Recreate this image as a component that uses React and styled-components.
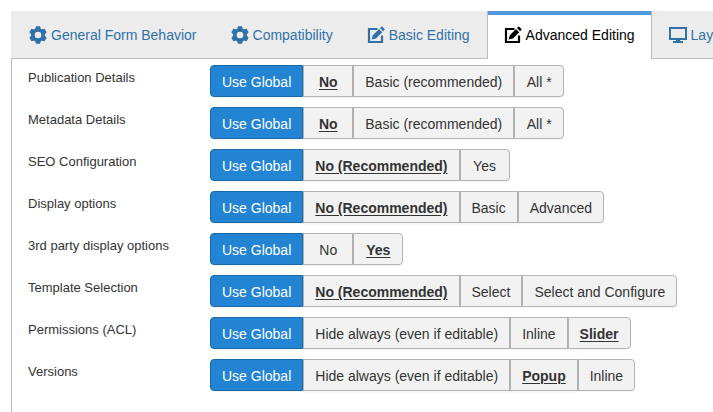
import { useState } from "react"
import styled, { createGlobalStyle } from "styled-components"

const GlobalStyle = createGlobalStyle`
    * {
        box-sizing: border-box;
    }

    body {
        margin: 0;
        background-color: white;
        color: #333;
        font-family: "Liberation Sans", Arial, sans-serif;
        font-size: 14px;
        overflow: hidden;
    }
`

const Page = styled.div`
    min-height: 100vh;
    padding: 11px 0 0 11px;
    display: flex;
    flex-direction: column;
    overflow: hidden;
`

const TabBar = styled.nav`
    height: 48px;
    display: flex;
    padding-left: 1px;
    background-color: #ececec;
    box-shadow: inset 0 -1px #c0c0c4;
`

const Tab = styled.button`
    flex: none;
    display: flex;
    align-items: center;
    gap: 4px;
    padding: 0 16px;
    border: 1px solid transparent;
    border-width: 0 1px;
    background-color: ${props => props.$active ? "white" : "transparent"};
    border-color: ${props => props.$active ? "#b4bcc6" : "transparent"};
    box-shadow: ${props => props.$active ? "inset 0 4px #5097de" : "none"};
    color: ${props => props.$active ? "black" : "#3071a9"};
    font: inherit;
    cursor: pointer;
`

const Icon = styled.svg`
    width: 18px;
    height: 18px;
    flex: none;
`

const Panel = styled.main`
    flex: 1;
    display: flex;
    flex-direction: column;
    gap: 10px;
    padding: 6px 0 20px 16px;
    border-left: 1px solid #b4bcc6;
`

const Field = styled.div`
    display: flex;
    align-items: flex-start;
`

const FieldLabel = styled.span`
    width: 182px;
    flex: none;
    padding-top: 4px;
    font-size: 13px;
    line-height: 18px;
`

const ButtonGroup = styled.div`
    display: flex;
`

const Option = styled.label`
    display: flex;
    align-items: center;
    justify-content: center;
    height: 32px;
    min-width: 50px;
    padding: 2px 11px 0;
    border: 1px solid ${props => props.$checked ? "#1a69a8" : "#b3b3b3"};
    background-color: ${props => props.$checked ? "#2384d3" : "#f2f2f2"};
    color: ${props => props.$checked ? "white" : "#333"};
    font-weight: ${props => props.$default ? "bold" : "normal"};
    text-decoration: ${props => props.$default ? "underline" : "none"};
    text-underline-offset: 2px;
    box-shadow: 0 1px 2px rgba(0, 0, 0, 0.05);
    white-space: nowrap;
    cursor: pointer;

    &:first-child {
        border-radius: 4px 0 0 4px;
    }

    &:last-child {
        border-radius: 0 4px 4px 0;
    }
`

const Radio = styled.input`
    position: absolute;
    opacity: 0;
    width: 1px;
    height: 1px;
    margin: 0;
    pointer-events: none;
`

const GearIcon = () => (
    <Icon viewBox="0 0 18 18" aria-hidden="true">
        <circle cx="9" cy="9" r="5" fill="none" stroke="currentColor" strokeWidth="3.4" />
        {[0, 60, 120, 180, 240, 300].map(angle => (
            <path key={angle} d="M5.6 4.4 7 .2h4l1.4 4.2z" fill="currentColor" transform={`rotate(${angle} 9 9)`} />
        ))}
    </Icon>
)

const EditIcon = () => (
    <Icon viewBox="0 0 18 18" aria-hidden="true">
        <path d="M10.5 3H2v13h13V9.5" fill="none" stroke="currentColor" strokeWidth="2.2" />
        <path d="M4.6 13.4 5.8 9.2 12 3l3.2 3.2L9 12.4zM12.9 2.1l1.2-1.2q.7-.7 1.4 0l1.8 1.8q.7.7 0 1.4l-1.2 1.2z" fill="currentColor" />
    </Icon>
)

const ScreenIcon = () => (
    <Icon viewBox="0 0 18 18" aria-hidden="true">
        <rect x="1" y="2" width="16" height="11" fill="none" stroke="currentColor" strokeWidth="2" />
        <path d="M7 14h4v1h3v2H4v-2h3z" fill="currentColor" />
    </Icon>
)

const tabs = [
    { name: "General Form Behavior", icon: GearIcon },
    { name: "Compatibility", icon: GearIcon },
    { name: "Basic Editing", icon: EditIcon },
    { name: "Advanced Editing", icon: EditIcon },
    { name: "Layout", icon: ScreenIcon },
]

// preset is the index of the option that the global configuration uses
const fields = [
    { id: "publication", label: "Publication Details", options: ["Use Global", "No", "Basic (recommended)", "All *"], preset: 1 },
    { id: "metadata", label: "Metadata Details", options: ["Use Global", "No", "Basic (recommended)", "All *"], preset: 1 },
    { id: "seo", label: "SEO Configuration", options: ["Use Global", "No (Recommended)", "Yes"], preset: 1 },
    { id: "display", label: "Display options", options: ["Use Global", "No (Recommended)", "Basic", "Advanced"], preset: 1 },
    { id: "thirdparty", label: "3rd party display options", options: ["Use Global", "No", "Yes"], preset: 2 },
    { id: "template", label: "Template Selection", options: ["Use Global", "No (Recommended)", "Select", "Select and Configure"], preset: 1 },
    { id: "permissions", label: "Permissions (ACL)", options: ["Use Global", "Hide always (even if editable)", "Inline", "Slider"], preset: 3 },
    { id: "versions", label: "Versions", options: ["Use Global", "Hide always (even if editable)", "Popup", "Inline"], preset: 2 },
]

const OptionField = ({ field }) => {
    const [value, setValue] = useState(0)

    return (
        <Field>
            <FieldLabel id={field.id}>{field.label}</FieldLabel>
            <ButtonGroup role="radiogroup" aria-labelledby={field.id}>
                {field.options.map((option, i) => (
                    <Option key={option} $checked={value === i} $default={field.preset === i}>
                        <Radio type="radio" name={field.id} checked={value === i} onChange={() => setValue(i)} />
                        {option}
                    </Option>
                ))}
            </ButtonGroup>
        </Field>
    )
}

const App = () => {
    const [active, setActive] = useState("Advanced Editing")

    return (
        <>
            <GlobalStyle />
            <Page>
                <TabBar>
                    {tabs.map(tab => (
                        <Tab key={tab.name} type="button" $active={tab.name === active} onClick={() => setActive(tab.name)}>
                            <tab.icon />
                            {tab.name}
                        </Tab>
                    ))}
                </TabBar>
                <Panel>
                    {fields.map(field => <OptionField key={field.id} field={field} />)}
                </Panel>
            </Page>
        </>
    )
}

export default App
